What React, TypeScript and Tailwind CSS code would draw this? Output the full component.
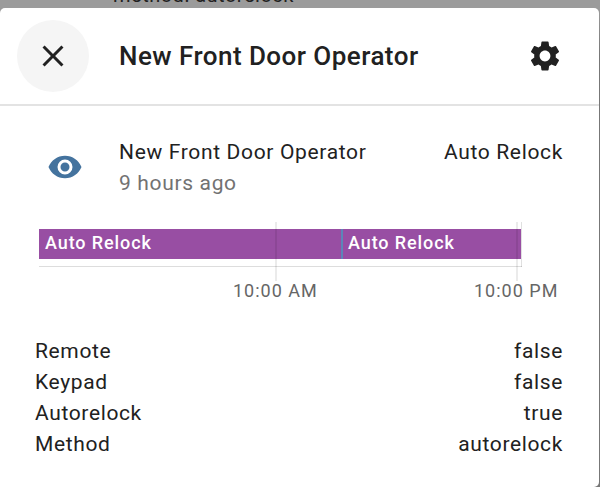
import { MdClose, MdSettings } from "react-icons/md";

const attributes = [
  ["Remote", "false"],
  ["Keypad", "false"],
  ["Autorelock", "true"],
  ["Method", "autorelock"],
];

export default function App() {
  return (
    <div className="h-[487px] w-[600px] overflow-hidden bg-[#9b9b9b] font-[Roboto,sans-serif] text-[#212121]">
      <div className="flex h-2 items-end overflow-hidden pl-[113px] text-[20px] leading-[26px] tracking-[0.5px]">
        <span>method: autorelock</span>
      </div>
      <div className="bg-linear-to-b from-[#9b9b9b] to-[#777777] to-10% pr-px">
        <main className="h-[479px] rounded-t-[5px] rounded-br-[5px] bg-white">
          <header className="flex h-[98px] items-center border-b-2 border-[#e3e3e3] pl-[17px] pr-9">
            <button className="flex size-[72px] items-center justify-center rounded-full bg-[#f5f5f5]">
              <MdClose size={36} />
            </button>
            <h1 className="ml-[30px] flex-1 text-[26px] font-medium leading-[40px] tracking-[0.46px]">New Front Door Operator</h1>
            <MdSettings size={36} />
          </header>
          <section className="flex h-[116px] pl-[47px] pr-9 pt-[31px] text-[21px] leading-[31px] tracking-[0.66px]">
            <svg className="mt-3 size-9 text-[#44739e]" viewBox="0 0 24 24" fill="currentColor">
              <path d="M12 9a3 3 0 0 0 0 6 3 3 0 0 0 0-6m0 8a5 5 0 0 1 0-10 5 5 0 0 1 0 10m0-12.5C7 4.5 2.73 7.61 1 12c1.73 4.39 6 7.5 11 7.5s9.27-3.11 11-7.5c-1.73-4.39-6-7.5-11-7.5" />
            </svg>
            <div className="ml-9 flex-1">
              <p>New Front Door Operator</p>
              <p className="text-[#727272]">9 hours ago</p>
            </div>
            <p>Auto Relock</p>
          </section>
          <section className="relative h-[113px] text-[18px]">
            <div className="ml-[39px] flex h-[45px] w-[483px] border-b border-[#dddddd] pr-px pt-[7px] font-medium leading-[27px] tracking-[0.9px] text-white">
              <div className="h-[30px] w-[302px] bg-[#984ea3] pl-1.5">Auto Relock</div>
              <div className="h-[30px] w-[2px] bg-[#5c86b8]" />
              <div className="h-[30px] flex-1 bg-[#984ea3] pl-[5px]">Auto Relock</div>
            </div>
            <i className="absolute left-[275px] top-0 h-[59px] w-[2px] bg-black/8" />
            <i className="absolute left-[516px] top-0 h-[59px] w-[2px] bg-black/8" />
            <i className="absolute left-[521px] top-0 h-[45px] w-px bg-black/12" />
            <div className="flex pl-[233px] pt-[10px] leading-[27px] tracking-[1px] text-[#666666]">
              <span className="w-[241px]">10:00 AM</span><span>10:00 PM</span>
            </div>
          </section>
          <dl className="pl-[35px] pr-9 pt-px text-[21px] leading-[31px] tracking-[0.63px]">
            {attributes.map(([name, value]) => (
              <div key={name} className="flex justify-between"><dt>{name}</dt><dd>{value}</dd></div>
            ))}
          </dl>
        </main>
      </div>
    </div>
  );
}
